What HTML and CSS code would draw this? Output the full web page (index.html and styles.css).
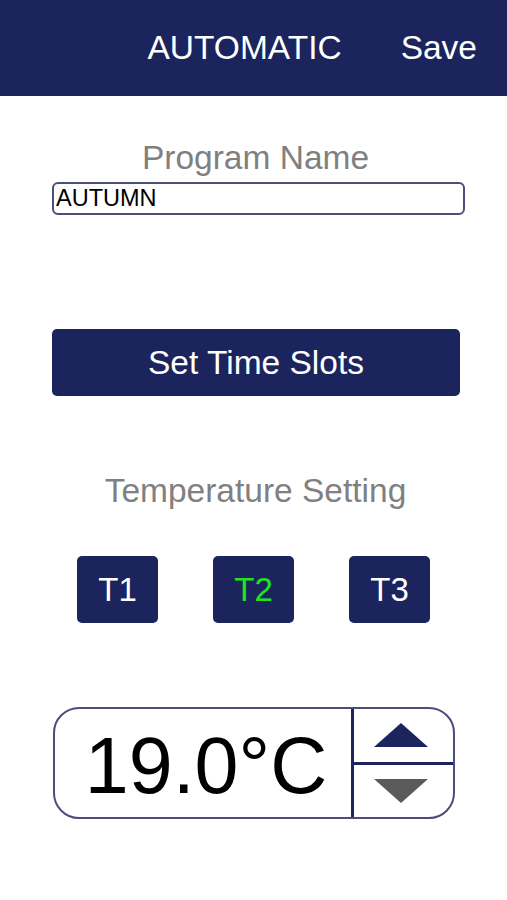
FILE: index.html
```html
<!DOCTYPE html>
<html lang="en">
<head>
  <meta charset="UTF-8">
  <meta name="viewport" content="width=device-width, initial-scale=1.0">
  <title>Automatic Program</title>
  <link rel="stylesheet" href="styles.css">
</head>
<body>
  <header class="top-bar">
    <span class="top-title">AUTOMATIC</span>
    <span class="top-save">Save</span>
  </header>

  <main class="program">
    <div class="section-label">Program Name</div>
    <input type="text" class="name-input" value="AUTUMN">

    <button class="slots-button">Set Time Slots</button>

    <div class="section-label temp-label">Temperature Setting</div>
    <div class="temp-tabs">
      <button class="temp-tab">T1</button>
      <button class="temp-tab active">T2</button>
      <button class="temp-tab">T3</button>
    </div>

    <div class="temp-box">
      <div class="temp-value">19.0°C</div>
      <div class="temp-arrows">
        <div class="arrow-cell">
          <svg width="56" height="26" viewBox="0 0 56 26"><polygon points="28,1 55,25 1,25" fill="#1b245c"/></svg>
        </div>
        <div class="arrow-cell down">
          <svg width="56" height="26" viewBox="0 0 56 26"><polygon points="1,1 55,1 28,25" fill="#5a5a5a"/></svg>
        </div>
      </div>
    </div>
  </main>
</body>
</html>
```

FILE: styles.css
```css
* {
  box-sizing: border-box;
  font-family: "Liberation Sans", Arial, sans-serif;
}

body {
  margin: 0;
  background-color: #fff;
}

.top-bar {
  height: 96px;
  background-color: #1b245c;
  color: #fff;
  display: flex;
  justify-content: flex-end;
  align-items: center;
  gap: 59px;
  padding-right: 30px;
  font-size: 33.5px;
}

.program {
  width: 413px;
  margin-left: 52px;
  display: flex;
  flex-direction: column;
}

.section-label {
  margin-top: 43px;
  width: 407px;
  text-align: center;
  color: #808080;
  font-size: 33.5px;
  line-height: 38px;
}

.name-input {
  margin-top: 5px;
  width: 413px;
  height: 33px;
  border: 2px solid #4d4d7c;
  border-radius: 6px;
  padding: 0 2px;
  font-size: 23.5px;
  color: #000;
  outline: none;
}

.slots-button {
  margin-top: 114px;
  width: 408px;
  height: 67px;
  border: none;
  border-radius: 5px;
  background-color: #1b245c;
  color: #fff;
  font-size: 33.5px;
  cursor: pointer;
}

.temp-label {
  margin-top: 76px;
}

.temp-tabs {
  margin-top: 46px;
  width: 403px;
  display: flex;
  justify-content: center;
  gap: 55px;
}

.temp-tab {
  width: 81px;
  height: 67px;
  border: none;
  border-radius: 5px;
  background-color: #1b245c;
  color: #fff;
  font-size: 33px;
  cursor: pointer;
}

.temp-tab.active {
  color: #1ee61e;
}

.temp-box {
  margin-top: 84px;
  margin-left: 1px;
  width: 402px;
  height: 112px;
  border: 2px solid #4d4d7c;
  border-radius: 26px;
  display: flex;
  overflow: hidden;
}

.temp-value {
  width: 299px;
  border-right: 3px solid #1b245c;
  display: flex;
  align-items: center;
  justify-content: center;
  font-size: 79px;
  color: #000;
  padding-top: 5px;
  padding-left: 6px;
}

.temp-arrows {
  flex: 1;
  display: flex;
  flex-direction: column;
}

.arrow-cell {
  flex: 1;
  display: flex;
  align-items: center;
  justify-content: center;
  padding-right: 6px;
  cursor: pointer;
}

.arrow-cell.down {
  border-top: 3px solid #1b245c;
}
```
